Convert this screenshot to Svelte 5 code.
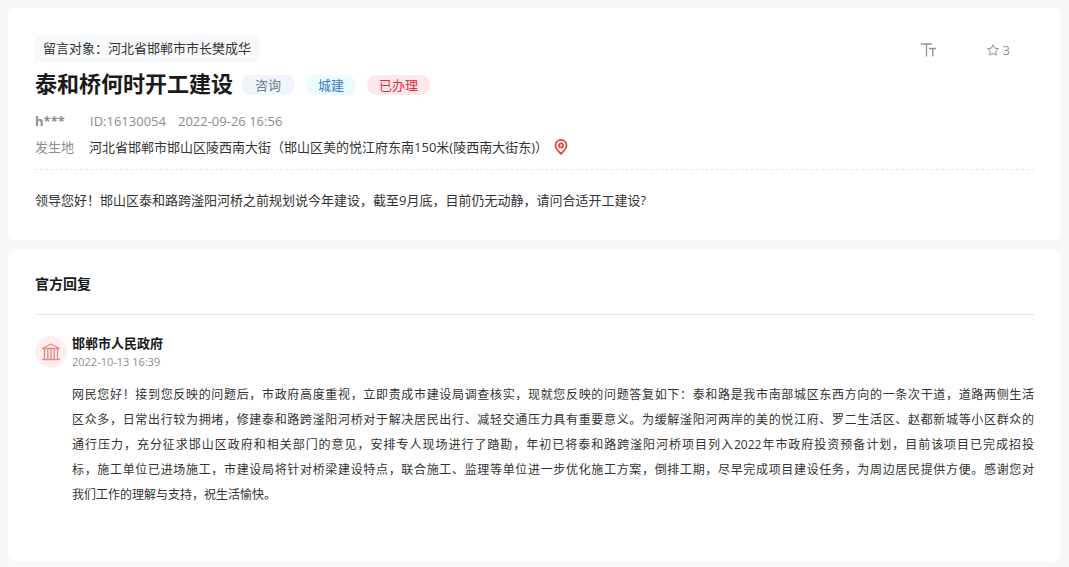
<script lang="ts">
  interface Tag {
    name: string;
    type: string;
  }

  const tags: Tag[] = [
    { name: '咨询', type: 'kind' },
    { name: '城建', type: 'field' },
    { name: '已办理', type: 'state' },
  ];

  const replyLines: string[] = [
    '网民您好！接到您反映的问题后，市政府高度重视，立即责成市建设局调查核实，现就您反映的问题答复如下：泰和路是我市南部城区东西方向的一条次干道，道路两侧生活',
    '区众多，日常出行较为拥堵，修建泰和路跨滏阳河桥对于解决居民出行、减轻交通压力具有重要意义。为缓解滏阳河两岸的美的悦江府、罗二生活区、赵都新城等小区群众的',
    '通行压力，充分征求邯山区政府和相关部门的意见，安排专人现场进行了踏勘，年初已将泰和路跨滏阳河桥项目列入2022年市政府投资预备计划，目前该项目已完成招投',
    '标，施工单位已进场施工，市建设局将针对桥梁建设特点，联合施工、监理等单位进一步优化施工方案，倒排工期，尽早完成项目建设任务，为周边居民提供方便。感谢您对',
    '我们工作的理解与支持，祝生活愉快。',
  ];
</script>

<main class="page">
  <section class="card message">
    <div class="top">
      <div class="target">留言对象：河北省邯郸市市长樊成华</div>
      <div class="tools">
        <button type="button" aria-label="字号">
          <svg width="16" height="14" viewBox="0 0 16 14" fill="none" stroke="currentColor" stroke-width="1.3">
            <path d="M0 1H11M5.5 1V13.5M8 5.5H15M11.8 5.5V13.5" />
          </svg>
        </button>
        <button type="button" aria-label="收藏 3">
          <svg width="12" height="12" viewBox="0 0 12 12" fill="none" stroke="currentColor" stroke-linejoin="round">
            <path d="M6 0.8L7.6 4.1L11.4 4.6L8.7 7.1L9.3 11.1L6 9.4L2.7 11.1L3.3 7.1L0.6 4.6L4.4 4.1Z" />
          </svg>
          <span>3</span>
        </button>
      </div>
    </div>

    <div class="title-row">
      <h1>泰和桥何时开工建设</h1>
      {#each tags as tag}
        <span class="tag {tag.type}">{tag.name}</span>
      {/each}
    </div>

    <div class="meta">
      <b>h***</b>
      <span>ID:16130054</span>
      <time>2022-09-26 16:56</time>
    </div>

    <div class="place">
      <span class="label">发生地</span>
      <span>河北省邯郸市邯山区陵西南大街（邯山区美的悦江府东南150米(陵西南大街东)）</span>
      <svg width="14" height="16" viewBox="0 0 14 16" fill="none" stroke="#e8402f" stroke-width="1.7">
        <path d="M7 14.8C4.2 12 1.5 9.4 1.5 6.4a5.5 5.5 0 0 1 11 0C12.5 9.4 9.8 12 7 14.8Z" />
        <circle cx="7" cy="6.4" r="2" />
      </svg>
    </div>

    <p class="content">领导您好！邯山区泰和路跨滏阳河桥之前规划说今年建设，截至9月底，目前仍无动静，请问合适开工建设?</p>
  </section>

  <section class="card reply">
    <h2>官方回复</h2>
    <div class="reply-item">
      <div class="avatar">
        <svg width="20" height="18" viewBox="0 0 20 18" fill="none" stroke="#e58a85" stroke-width="1.3">
          <path d="M1.5 5.5L10 1L18.5 5.5Z" stroke-linejoin="round" />
          <path d="M3.5 6V16M6.8 6V16M10 6V16M13.2 6V16M16.5 6V16M1 16.5H19" />
        </svg>
      </div>
      <div class="reply-main">
        <h3>邯郸市人民政府</h3>
        <time>2022-10-13 16:39</time>
        <p>
          {#each replyLines as line}
            <span>{line}</span>
          {/each}
        </p>
      </div>
    </div>
  </section>
</main>

<style>
  :global(body) {
    margin: 0;
    background: #f7f8fa;
  }

  .page {
    display: flex;
    flex-direction: column;
    gap: 9px;
    padding: 8px 8px 6px;
    font-family: 'Open Sans', 'Noto Sans CJK SC', sans-serif;
    font-size: 13px;
    color: #333;
  }

  .card {
    background: #fff;
    border-radius: 8px;
    padding: 27px;
  }

  h1,
  h2,
  h3,
  p {
    margin: 0;
  }

  .top {
    display: flex;
    justify-content: space-between;
    align-items: flex-start;
  }

  .target {
    padding: 0 8px;
    line-height: 27px;
    background: #f7f8fa;
    border-radius: 2px;
  }

  .tools {
    display: flex;
    gap: 50px;
    padding: 5px 24px 0 0;
  }

  .tools button {
    display: flex;
    align-items: center;
    gap: 4px;
    padding: 0;
    border: 0;
    background: none;
    color: #8b929b;
    font: inherit;
    line-height: 20px;
    cursor: pointer;
  }

  .title-row {
    display: flex;
    align-items: center;
    gap: 11px;
    height: 46px;
  }

  h1 {
    margin-right: -3px;
    padding-bottom: 4px;
    font-size: 22px;
    line-height: 30px;
    color: #1a1a1a;
  }

  .tag {
    padding: 0 12px;
    border-radius: 10px;
    line-height: 20px;
  }

  .kind {
    padding: 0 14px;
    background: #f0f4fb;
    color: #6b7a90;
  }

  .field {
    background: #e9fcfb;
    color: #3c78c8;
  }

  .state {
    background: #fce8ea;
    color: #d9303e;
  }

  .meta {
    display: flex;
    gap: 12px;
    line-height: 26px;
    color: #8c8c8c;
  }

  .meta b {
    min-width: 43px;
  }

  .place {
    display: flex;
    align-items: center;
    line-height: 26px;
    padding-bottom: 9px;
    border-bottom: 1px dashed #e5e5e5;
  }

  .label {
    margin-right: 15px;
    color: #8c8c8c;
  }

  .place svg {
    flex: none;
    margin-left: 6px;
  }

  .content {
    padding: 17px 0 0;
    line-height: 26px;
  }

  .reply {
    padding-bottom: 54px;
  }

  h2 {
    padding: 0 0 23px;
    font-size: 14px;
    line-height: 15px;
    color: #1a1a1a;
    border-bottom: 1px solid #e6e6e6;
  }

  .reply-item {
    display: flex;
    gap: 5px;
    padding-top: 18px;
  }

  .avatar {
    display: flex;
    flex: none;
    align-items: center;
    justify-content: center;
    width: 32px;
    height: 32px;
    margin-top: 3px;
    border-radius: 50%;
    background: #feeeee;
  }

  .reply-main {
    flex: 1;
  }

  h3 {
    font-size: 13px;
    line-height: 20px;
    color: #1a1a1a;
  }

  .reply-main time {
    display: block;
    font-size: 11px;
    line-height: 18px;
    color: #8c8c8c;
  }

  .reply-main p {
    padding-top: 11px;
    font-size: 12px;
    line-height: 25px;
  }

  .reply-main p span {
    display: block;
    text-align: justify;
    text-align-last: justify;
  }

  .reply-main p span:last-child {
    text-align-last: left;
  }
</style>
